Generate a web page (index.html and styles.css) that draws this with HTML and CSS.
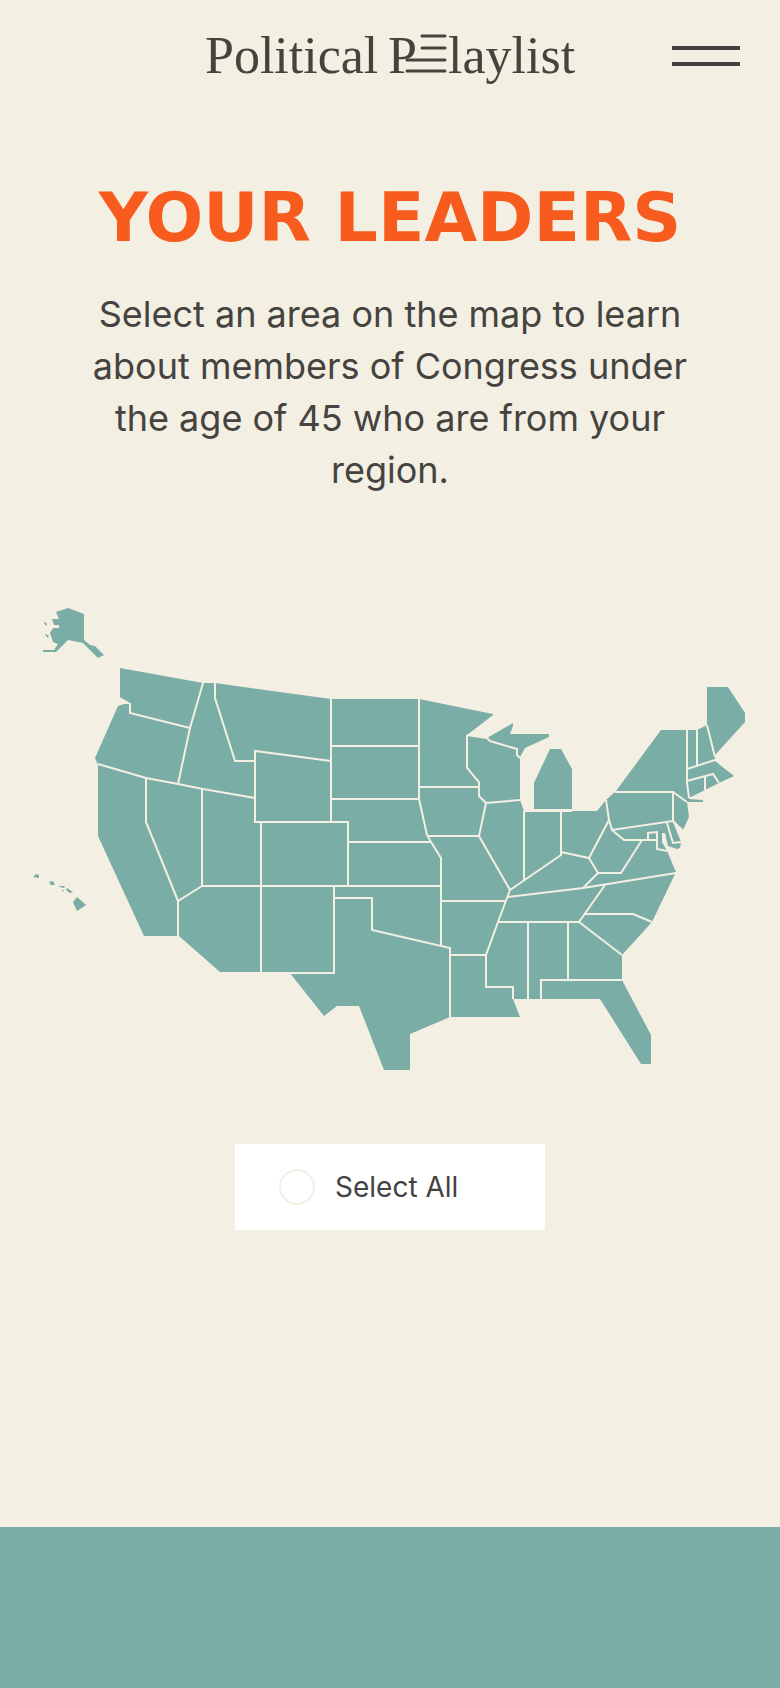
FILE: index.html
```html
<!DOCTYPE html>
<html lang="en">
<head>
    <meta charset="UTF-8">
    <meta name="viewport" content="width=device-width, initial-scale=1.0">
    <title>Political Playlist - Your Leaders</title>
    <link rel="stylesheet" href="styles.css">
</head>
<body>

<header class="header">
    <a href="#" class="logo" aria-label="Political Playlist">
        <svg viewBox="0 0 372 60" width="372" height="60">
            <text x="1" y="47">Political</text>
            <text x="184" y="47">P</text>
            <text x="244" y="47">laylist</text>
            <path d="M218 10H241M218 22H241M203 34H241M203 45H241"/>
        </svg>
    </a>
    <button type="button" class="menu" aria-label="Menu">
        <span></span>
        <span></span>
    </button>
</header>

<main class="leaders">
    <h1>YOUR LEADERS</h1>
    <p class="intro">Select an area on the map to learn about members of Congress under the age of 45 who are from your region.</p>

    <svg class="map" viewBox="30 600 720 480" role="img" aria-label="Map of the United States">
        <g class="land">
            <!-- Alaska -->
            <path d="M68 608L84 614V640L90 645L95 646L104 655L98 658L83 643L68 640L56 652H43V650H54L58 644L53 642L50 633L53 628H59V625H54L52 619H59L56 612Z"/>
            <path d="M45 622L47 624L46 626L44 623ZM46 634L49 636L48 638L45 635Z"/>
            <!-- Hawaii -->
            <path d="M33 877L36 874L39 875V878ZM49 882L53 881L55 885H51ZM59 886H65L64 888L60 887ZM62 890H64L63 892ZM67 888L73 892L70 893L66 890ZM77 897L86 905L77 911L73 902Z"/>
            <!-- Mainland -->
            <path d="M120 668L203 683H215L331 699H419L493 714V715L467 735L487 738L513 723V726L510 734H549V737L525 748L520 757V800L524 811H597L606 800L616 791L661 730H697L707 725V687H728L745 713V722L715 755V761L734 776L719 783L689 798L703 799V802H687L689 817L683 830L673 822L681 842L680 848L677 849L668 846L665 833H662V842L667 851L676 872L652 922L622 955V980L651 1035V1064H641L600 999H513L520 1017H450L410 1034V1070H384L359 1006H337L324 1016L289 972H220L179 936H144L98 836V765L95 758L118 706L124 704H130L120 698Z"/>
            <!-- Lower Michigan -->
            <path d="M550 749H561L572 769V809H534V783Z"/>
        </g>
        <g class="borders">
            <!-- West -->
            <path d="M120 698L130 704V713L190 728M203 683L190 728L178 784M98 764L146 778L178 784L203 789L255 798"/>
            <path d="M215 683V698L235 761H255M331 761L255 751V822H348V886M261 822V973M146 778V822L178 901L202 886M202 789V886H441M178 901V936"/>
            <!-- Plains and Texas -->
            <path d="M334 886V973H289M334 898H372V930L450 948V1017M331 699V822M331 746H419M331 799H419M419 699V799L427 835L431 842L441 858V946M348 842H430"/>
            <!-- Midwest -->
            <path d="M419 787H478M427 836H479M467 735V768L479 782V796L486 803L520 800M486 803L479 836L510 890M467 735L487 738L490 741L517 749V755L520 758"/>
            <path d="M524 811V881M510 890L561 855V811M561 852L589 858L609 820L606 800M524 811H572M589 858L598 873L583 888M598 873H621L642 840"/>
            <!-- South -->
            <path d="M508 897L583 888L676 873M441 901H505M510 890L498 922L486 955V987H513V999M450 955H486M498 922H579L605 885M585 914H633L652 922M579 922L622 955M528 922V999M568 922V980M541 999V980H622"/>
            <!-- North East -->
            <path d="M609 820L612 830L673 821M612 830L624 840H657V849L667 851M648 840V833L657 832V840M667 823L673 843L681 842M615 792H673V821L683 831M673 792L687 802"/>
            <path d="M687 730V782L689 798M697 730V766M687 769L715 760M707 725L715 757M687 781L713 774L719 783M705 777V790M689 798L703 799"/>
        </g>
    </svg>

    <label class="select-all" for="select-all">
        <input type="radio" id="select-all" name="region">
        Select All
    </label>
</main>

<footer class="footer"></footer>

</body>
</html>
```

FILE: styles.css
```css
body {
    display: flex;
    flex-direction: column;
    min-height: 100vh;
    margin: 0;
    font-family: Inter, "Liberation Sans", sans-serif;
    color: #454340;
    background-color: #f3efe2;
}
.header {
    display: grid;
    grid-template-columns: 1fr auto 1fr;
    align-items: center;
    padding: 24px 40px;
    height: 64px;
}
.logo {
    grid-column: 2;
    height: 60px;
}
.logo text {
    font-family: "Liberation Serif", serif;
    font-size: 52px;
    fill: #46433d;
}
.logo path {
    stroke: #46433d;
    stroke-width: 3;
    stroke-linecap: round;
}
.menu {
    justify-self: end;
    display: flex;
    flex-direction: column;
    gap: 12px;
    padding: 0;
    border: none;
    background: none;
    cursor: pointer;
}
.menu span {
    width: 68px;
    height: 4px;
    background-color: #43403f;
}
.leaders {
    display: flex;
    flex-direction: column;
    align-items: center;
    padding: 66px 30px 297px;
}
h1 {
    margin: 0;
    font-family: "DejaVu Sans", sans-serif;
    font-size: 68px;
    line-height: 80px;
    font-weight: bold;
    text-align: center;
    color: #f75c1e;
}
.intro {
    max-width: 620px;
    margin: 30px 0 104px;
    font-size: 36px;
    line-height: 52px;
    text-align: center;
}
.map {
    width: 100%;
}
.land {
    fill: #7aada6;
}
.borders {
    fill: none;
    stroke: #f3efe2;
    stroke-width: 2;
}
.select-all {
    display: flex;
    align-items: center;
    gap: 20px;
    box-sizing: border-box;
    width: 310px;
    height: 86px;
    margin-top: 64px;
    padding-left: 44px;
    font-size: 28px;
    background-color: #ffffff;
    cursor: pointer;
}
.select-all input {
    appearance: none;
    width: 36px;
    height: 36px;
    margin: 0;
    border: 2px solid #f3efe2;
    border-radius: 50%;
}
.select-all input:checked {
    background-color: #7aada6;
}
.footer {
    flex: 1;
    min-height: 160px;
    background-color: #7aada6;
}
```
